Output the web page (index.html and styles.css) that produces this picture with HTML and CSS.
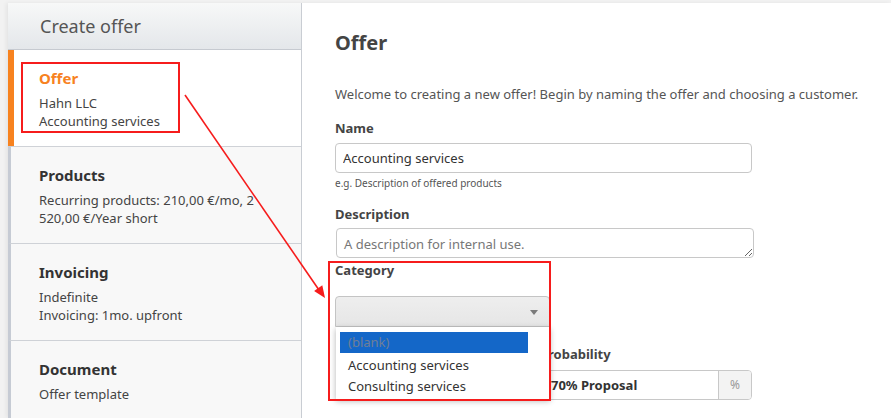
FILE: index.html
```html
<!DOCTYPE html>
<html lang="en">
<head>
<meta charset="utf-8">
<title>Create offer</title>
<link rel="stylesheet" href="styles.css">
</head>
<body>
<div class="app">
  <aside class="sidebar">
    <div class="side-head">Create offer</div>
    <div class="step active">
      <div class="step-title">Offer</div>
      <div class="step-text">Hahn LLC<br>Accounting services</div>
    </div>
    <div class="step">
      <div class="step-title">Products</div>
      <div class="step-text">Recurring products: 210,00 €/mo, 2 520,00 €/Year short</div>
    </div>
    <div class="step">
      <div class="step-title">Invoicing</div>
      <div class="step-text">Indefinite<br>Invoicing: 1mo. upfront</div>
    </div>
    <div class="step">
      <div class="step-title">Document</div>
      <div class="step-text">Offer template</div>
    </div>
  </aside>
  <main class="main">
    <h2 class="title">Offer</h2>
    <p class="intro">Welcome to creating a new offer! Begin by naming the offer and choosing a customer.</p>

    <label class="label lbl-name">Name</label>
    <input class="input input-name" type="text" value="Accounting services">
    <div class="help">e.g. Description of offered products</div>

    <label class="label lbl-desc">Description</label>
    <textarea class="textarea" placeholder="A description for internal use."></textarea>

    <label class="label lbl-cat">Category</label>
    <div class="select-wrap">
      <div class="select"><span class="caret"></span></div>
      <ul class="dropdown">
        <li class="opt selected">(blank)</li>
        <li class="opt">Accounting services</li>
        <li class="opt">Consulting services</li>
      </ul>
    </div>

    <div class="prob">
      <label class="label lbl-prob">Probability</label>
      <div class="group">
        <div class="group-input">70% Proposal</div>
        <div class="addon">%</div>
      </div>
    </div>
  </main>
</div>
<svg class="annot" width="891" height="418" viewBox="0 0 891 418">
  <rect x="22" y="63" width="157" height="69" fill="none" stroke="#f61c1c" stroke-width="2"/>
  <rect x="329" y="262" width="221" height="138" fill="none" stroke="#f61c1c" stroke-width="2"/>
  <line x1="185" y1="95" x2="319" y2="290" stroke="#f61c1c" stroke-width="1.6"/>
  <polygon points="325,298 314.1,290.9 322.3,285.3" fill="#f61c1c"/>
</svg>
</body>
</html>
```
FILE: styles.css
```css
* { box-sizing: border-box; }
html, body { margin: 0; }
body {
  background: #f2f2f2;
  padding: 3px 0 0 8px;
  font-family: "Noto Sans", "Open Sans", sans-serif;
  color: #444;
  height: 418px;
  overflow: hidden;
  position: relative;
}
.app {
  display: flex;
  background: #fff;
  height: 415px;
  box-shadow: -2px 0 4px rgba(0,0,0,0.06);
}
.sidebar {
  width: 294px;
  flex: none;
  display: flex;
  flex-direction: column;
  background: #f8f8f8;
  border-right: 1px solid #c9cdd3;
  overflow: hidden;
}
.side-head {
  flex: none;
  height: 47px;
  padding: 1px 0 0 32px;
  font-size: 18px;
  line-height: 45px;
  color: #555;
  background: linear-gradient(#f7f8f8, #e4e7ea);
  border-bottom: 1px solid #c6cad0;
}
.step {
  flex: none;
  height: 97px;
  padding: 17px 25px 0 28px;
  border-left: 3px solid #c6cbd4;
  border-top: 1px solid #cfd2d7;
  background: #f8f8f8;
}
.step.active {
  height: 96px;
  border-top: none;
  border-left: 6px solid #f7821f;
  padding: 17px 25px 0 25px;
  background: #fff;
}
.step-title {
  font-size: 15px;
  line-height: 22px;
  font-weight: 700;
  color: #333;
}
.step.active .step-title { color: #f7821f; }
.step-text {
  margin-top: 5px;
  font-size: 13px;
  line-height: 18px;
  color: #444;
}

.main {
  flex: 1;
  padding: 26px 0 0 33px;
  position: relative;
}
.title {
  margin: 0;
  font-size: 20px;
  line-height: 28px;
  font-weight: 700;
  color: #444;
}
.intro {
  margin: 28px 0 0;
  font-size: 13px;
  line-height: 18px;
  color: #555;
}
.label {
  display: block;
  font-size: 13px;
  line-height: 18px;
  font-weight: 700;
  color: #444;
}
.lbl-name { margin-top: 16px; }
.lbl-desc { margin-top: 15px; }
.lbl-cat { margin-top: 3px; }
.input, .textarea {
  display: block;
  width: 417px;
  height: 30px;
  margin-top: 5px;
  border: 1px solid #c8c8c8;
  border-radius: 4px;
  font-family: inherit;
  font-size: 13px;
  line-height: 18px;
  color: #333;
  padding: 5px 7px;
  outline: none;
  background: #fff;
}
.input-name { margin-top: 6px; }
.textarea {
  width: 418px;
  margin-left: 1px;
  padding: 6px 7px 0;
  resize: vertical;
  overflow: hidden;
}
.textarea::placeholder { color: #777; }
.help {
  margin-top: 3px;
  font-size: 10px;
  line-height: 14px;
  color: #555;
}
.select-wrap {
  position: relative;
  margin-top: 17px;
  width: 215px;
}
.select {
  height: 31px;
  border: 1px solid #c4c4c4;
  border-radius: 4px 4px 0 0;
  background: linear-gradient(#eeeeee, #e6e6e6);
  position: relative;
}
.caret {
  position: absolute;
  right: 11px;
  top: 13px;
  width: 0;
  height: 0;
  border-left: 4px solid transparent;
  border-right: 4px solid transparent;
  border-top: 5px solid #7a7a7a;
}
.dropdown {
  position: absolute;
  top: 31px;
  left: 1px;
  width: 214px;
  height: 72px;
  margin: 0;
  padding: 5px 22px 0 4px;
  list-style: none;
  background: #fff;
  box-shadow: 0 2px 6px rgba(0,0,0,0.3);
  z-index: 2;
}
.opt {
  height: 21px;
  padding-left: 8px;
  font-size: 13px;
  line-height: 21px;
  color: #333;
  white-space: nowrap;
}
.opt.selected {
  margin-bottom: 2px;
  background: #1467c8;
  color: #6f7f95;
}
.prob {
  margin: 18px 0 0 205px;
  width: 212px;
}
.group {
  display: flex;
  height: 30px;
  margin-top: 7px;
  border: 1px solid #c8c8c8;
  border-radius: 4px;
  overflow: hidden;
}
.group-input {
  flex: 1;
  padding-left: 10px;
  font-size: 13px;
  line-height: 28px;
  font-weight: 700;
  color: #333;
}
.addon {
  width: 33px;
  border-left: 1px solid #c8c8c8;
  background: #f3f3f3;
  text-align: center;
  font-size: 12px;
  line-height: 28px;
  color: #999;
}
.annot {
  position: absolute;
  left: 0;
  top: 0;
  pointer-events: none;
  z-index: 5;
}
```
